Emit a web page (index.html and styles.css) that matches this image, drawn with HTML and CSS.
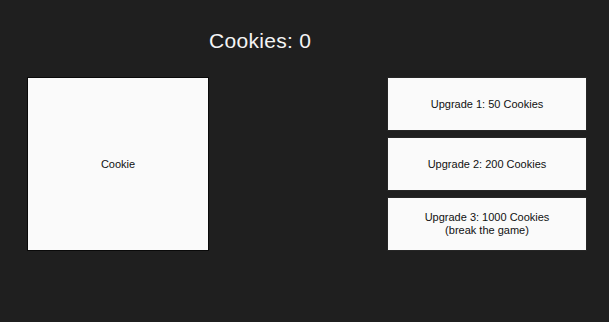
FILE: index.html
```html
<!DOCTYPE html>
<html lang="en">

<head>
    <meta charset="UTF-8">
    <meta name="viewport" content="width=device-width, initial-scale=1.0">
    <title>Cookie Clicker</title>
    <link rel="stylesheet" href="styles.css">
</head>

<body>
    <h1 class="score">Cookies: <span class="count">0</span></h1>
    <div class="game">
        <button class="cookie">Cookie</button>
        <div class="upgrades">
            <button class="upgrade">Upgrade 1: 50 Cookies</button>
            <button class="upgrade">Upgrade 2: 200 Cookies</button>
            <button class="upgrade">Upgrade 3: 1000 Cookies<br>(break the game)</button>
        </div>
    </div>
</body>

</html>
```

FILE: styles.css
```css
* {
    margin: 0;
    padding: 0;
    box-sizing: border-box;
}

body {
    background-color: #1f1f1f;
    font-family: "Liberation Sans", Arial, sans-serif;
    width: 609px;
    height: 322px;
    overflow: hidden;
}

.score {
    font-weight: normal;
    font-size: 21px;
    letter-spacing: 0.3px;
    color: #f4f4f4;
    padding: 28px 0 0 209px;
    height: 77px;
    line-height: 26px;
}

.game {
    display: flex;
    align-items: flex-start;
    padding-left: 27px;
    gap: 178px;
}

button {
    font-family: "Liberation Sans", Arial, sans-serif;
    font-size: 11px;
    line-height: 13px;
    color: #111;
    background-color: #fafafa;
    border: 1px solid #0a0a0a;
    cursor: pointer;
}

.cookie {
    width: 182px;
    height: 174px;
}

.upgrades {
    display: flex;
    flex-direction: column;
    gap: 6px;
}

.upgrade {
    width: 200px;
    height: 54px;
    border-color: #262626;
}
```
